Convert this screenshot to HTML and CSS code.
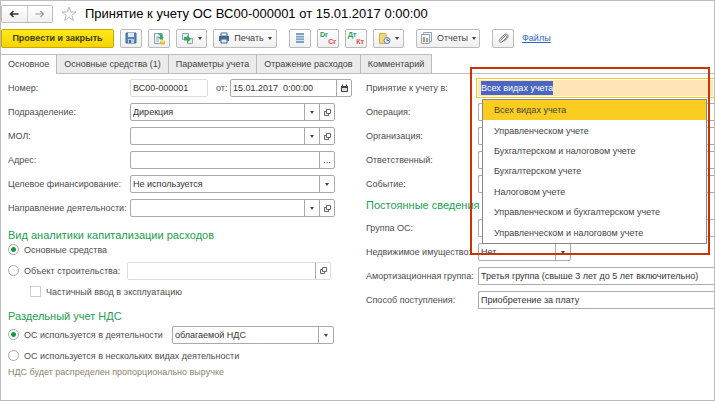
FILE: index.html
```html
<!DOCTYPE html>
<html lang="ru">
<head>
  <meta charset="UTF-8">
  <meta name="viewport" content="width=device-width, initial-scale=1.0">
  <title>Принятие к учету ОС</title>
  <link rel="stylesheet" href="styles.css">
</head>
<body>
  <svg class="sprite" aria-hidden="true">
    <symbol id="open" viewBox="0 0 9 9">
      <path d="M3.5 1.5h4v4h-4z M3.5 3.5h-2v4h4v-2" fill="none" stroke="#666"/>
    </symbol>
    <symbol id="calendar" viewBox="0 0 9 9">
      <path d="M1.5 2.5h6v5h-6z" fill="#ddd" stroke="#444"/>
      <path d="M1 2h7v2h-7z M2 0.500h1v2h-1z M6 0.500h1v2h-1z" fill="#444"/>
    </symbol>
  </svg>

  <div class="window">
    <header class="titlebar">
      <div class="nav">
        <button type="button" aria-label="Назад"><svg width="10" height="8" viewBox="0 0 10 8"><path d="M9.500 4H2M4.500 1L1.500 4l3 3" fill="none" stroke="#333" stroke-width="1.600"/></svg></button>
        <button type="button" aria-label="Вперед"><svg width="10" height="8" viewBox="0 0 10 8"><path d="M0.500 4H8M5.500 1l3 3-3 3" fill="none" stroke="#999" stroke-width="1.200"/></svg></button>
      </div>
      <svg class="star" width="16" height="16" viewBox="0 0 16 16"><path d="M8 1l1.800 5H15l-4.200 3.300 1.600 5.200L8 11.400l-4.400 3.100 1.600-5.200L1 6h5.200z" fill="#fff" stroke="#b5b9be"/></svg>
      <h1>Принятие к учету ОС ВС00-000001 от 15.01.2017 0:00:00</h1>
    </header>

    <div class="toolbar">
      <button type="button" class="btn primary">Провести и закрыть</button>
      <button type="button" class="btn icon" aria-label="Записать"><svg width="12" height="12" viewBox="0 0 12 12"><path d="M1 1h10v10H1z" fill="#5b86b5" stroke="#416b9b"/><path d="M3 1h6v4H3z" fill="#dfeaf5"/><path d="M3 7h6v4H3z" fill="#b9cde2"/><path d="M4 8h2v3H4z" fill="#416b9b"/></svg></button>
      <button type="button" class="btn icon" aria-label="Провести"><svg width="13" height="13" viewBox="0 0 13 13"><path d="M1.500 1.500h8v10h-8z" fill="#f4f7fa" stroke="#8fa3b8"/><path d="M3 5h3M3 7h3M3 9h3" stroke="#8fa3b8"/><path d="M5 2.500C6 1 8 1 9 2.500V5h2L8 8 5 5h2V3.500z" fill="#2fae57"/><path d="M7.500 9v3h4V9" fill="#ecc850" stroke="#dbb648"/><ellipse cx="9.500" cy="9" rx="2.500" ry="1" fill="#f6df8a"/></svg></button>
      <button type="button" class="btn menu" aria-label="Создать на основании"><svg width="13" height="13" viewBox="0 0 13 13"><path d="M1.500 1.500h6v6h-6z M6.500 6.500h5v5h-5z" fill="#e6edf3" stroke="#8fa3b8"/><path d="M3 5h3V3l4 4-4 4V8.500H3z" fill="#2fae57"/></svg><i class="caret"></i></button>
      <button type="button" class="btn menu wide"><svg width="12" height="12" viewBox="0 0 12 12"><path d="M3 1h6v3H3z" fill="#fff" stroke="#456d94"/><path d="M1 4h10v5H1z" fill="#456d94"/><path d="M3 7h6v4H3z" fill="#e3ecf5" stroke="#456d94"/></svg>Печать<i class="caret"></i></button>
      <button type="button" class="btn icon group" aria-label="Список"><svg width="10" height="12" viewBox="0 0 10 12"><path d="M1 1h8v10H1z" fill="#7fa1c3"/><path d="M1 3.500h8M1 6h8M1 8.500h8" stroke="#d6e3ef"/></svg></button>
      <button type="button" class="btn icon pair"><span>Dr</span><span>Cr</span></button>
      <button type="button" class="btn icon pair"><span>Дт</span><span>Кт</span></button>
      <button type="button" class="btn menu" aria-label="Журнал"><svg width="13" height="13" viewBox="0 0 13 13"><path d="M1.500 1.500h6l1 2v8h-7z" fill="#f1d578" stroke="#d0ae4a"/><circle cx="9" cy="8.500" r="3" fill="#edf3fa" stroke="#6488ba"/><path d="M9 6.500v2h2" fill="none" stroke="#456d94"/></svg><i class="caret"></i></button>
      <button type="button" class="btn menu wide group"><svg width="13" height="12" viewBox="0 0 13 12"><path d="M3.500 0.500h8v9h-8z" fill="#eef2f5" stroke="#8fa3b8"/><path d="M1.500 2.500h8v9h-8z" fill="#fff" stroke="#8fa3b8"/><path d="M4 5v5" stroke="#d9534f" stroke-width="1.500"/><path d="M7 6v4" stroke="#2fae57" stroke-width="1.500"/></svg>Отчеты<i class="caret"></i></button>
      <button type="button" class="btn icon group" aria-label="Прикрепить"><svg width="11" height="11" viewBox="0 0 11 11"><path d="M2.500 7.500l4.500-4.500a1 1 0 0 1 1.500 1.500L4 9a1.800 1.800 0 0 1-2.500-2.500L6.500 1.500a2.300 2.300 0 0 1 3.200 3.200L6 8.500" fill="none" stroke="#777"/></svg></button>
      <a class="files" href="#">Файлы</a>
    </div>

    <nav class="tabs">
      <a class="active" href="#">Основное</a>
      <a href="#">Основные средства (1)</a>
      <a href="#">Параметры учета</a>
      <a href="#">Отражение расходов</a>
      <a href="#">Комментарий</a>
    </nav>

    <form class="form">
      <div class="col left">
        <div class="row">
          <label for="number">Номер:</label>
          <div class="field short pale"><input id="number" type="text" value="ВС00-000001"></div>
          <label class="from" for="date">от:</label>
          <div class="field date"><input id="date" type="text" value="15.01.2017  0:00:00"><button type="button" aria-label="Календарь"><svg width="9" height="9"><use href="#calendar"/></svg></button></div>
        </div>
        <div class="row">
          <label for="dept">Подразделение:</label>
          <div class="field"><input id="dept" type="text" value="Дирекция"><button type="button" aria-label="Выбрать"><i class="caret"></i></button><button type="button" aria-label="Открыть"><svg width="9" height="9"><use href="#open"/></svg></button></div>
        </div>
        <div class="row">
          <label for="mol">МОЛ:</label>
          <div class="field"><input id="mol" type="text"><button type="button" aria-label="Выбрать"><i class="caret"></i></button><button type="button" aria-label="Открыть"><svg width="9" height="9"><use href="#open"/></svg></button></div>
        </div>
        <div class="row">
          <label for="address">Адрес:</label>
          <div class="field"><input id="address" type="text"><button type="button">...</button></div>
        </div>
        <div class="row">
          <label for="funding">Целевое финансирование:</label>
          <div class="field select"><select id="funding"><option>Не используется</option></select><i class="caret"></i></div>
        </div>
        <div class="row">
          <label for="direction">Направление деятельности:</label>
          <div class="field"><input id="direction" type="text"><button type="button" aria-label="Выбрать"><i class="caret"></i></button><button type="button" aria-label="Открыть"><svg width="9" height="9"><use href="#open"/></svg></button></div>
        </div>

        <h2 class="tight">Вид аналитики капитализации расходов</h2>
        <div class="choice">
          <input id="assets" type="radio" name="kind" checked>
          <label for="assets">Основные средства</label>
        </div>
        <div class="choice">
          <input id="building" type="radio" name="kind">
          <label for="building">Объект строительства:</label>
          <div class="field pale object"><input type="text" aria-label="Объект строительства"><button type="button" aria-label="Открыть"><svg width="9" height="9"><use href="#open"/></svg></button></div>
        </div>
        <div class="choice nested">
          <input id="partial" type="checkbox">
          <label for="partial">Частичный ввод в эксплуатацию</label>
        </div>

        <h2>Раздельный учет НДС</h2>
        <div class="choice">
          <input id="single" type="radio" name="vat" checked>
          <label for="single">ОС используется в деятельности</label>
          <div class="field select vat"><select aria-label="Вид деятельности"><option>облагаемой НДС</option></select><i class="caret"></i></div>
        </div>
        <div class="choice">
          <input id="several" type="radio" name="vat">
          <label for="several">ОС используется в нескольких видах деятельности</label>
        </div>
        <p class="note">НДС будет распределен пропорционально выручке</p>
      </div>

      <div class="col right">
        <div class="row">
          <label for="accounting">Принятие к учету в:</label>
          <div class="combo">
            <div class="focused"><input id="accounting" type="text" value="Всех видах учета"></div>
            <ul class="dropdown">
              <li class="selected">Всех видах учета</li>
              <li>Управленческом учете</li>
              <li>Бухгалтерском и налоговом учете</li>
              <li>Бухгалтерском учете</li>
              <li>Налоговом учете</li>
              <li>Управленческом и бухгалтерском учете</li>
              <li>Управленческом и налоговом учете</li>
            </ul>
            <div class="callout"></div>
          </div>
        </div>
        <div class="row">
          <label for="operation">Операция:</label>
          <div class="field open"><input id="operation" type="text"></div>
        </div>
        <div class="row">
          <label for="company">Организация:</label>
          <div class="field open"><input id="company" type="text"></div>
        </div>
        <div class="row">
          <label for="person">Ответственный:</label>
          <div class="field open"><input id="person" type="text"></div>
        </div>
        <div class="row">
          <label for="event">Событие:</label>
          <div class="field open"><input id="event" type="text"></div>
        </div>
        <h2 class="tight">Постоянные сведения</h2>
        <div class="row">
          <label for="group">Группа ОС:</label>
          <div class="field open"><input id="group" type="text"></div>
        </div>
        <div class="row">
          <label for="estate">Недвижимое имущество:</label>
          <div class="field select estate"><select id="estate"><option>Нет</option></select><i class="caret"></i></div>
        </div>
        <div class="row">
          <label for="amort">Амортизационная группа:</label>
          <div class="field open"><input id="amort" type="text" value="Третья группа (свыше 3 лет до 5 лет включительно)"></div>
        </div>
        <div class="row">
          <label for="receipt">Способ поступления:</label>
          <div class="field open"><input id="receipt" type="text" value="Приобретение за плату"></div>
        </div>
      </div>
    </form>
  </div>

  <script>
    const accounting = document.getElementById("accounting");
    accounting.focus();
    accounting.select();
  </script>
</body>
</html>
```
FILE: styles.css
```css
* {
  box-sizing: border-box;
}

body {
  margin: 0;
  font-family: "Liberation Sans", Arial, sans-serif;
  font-size: 9px;
  line-height: 14px;
  color: #4d4d4d;
  background: #fff;
}

button,
input,
select {
  font: inherit;
  color: #333;
  margin: 0;
}

.sprite {
  position: absolute;
  width: 0;
  height: 0;
}

.window {
  min-height: 100vh;
  border: 1px solid #bcbcbc;
  overflow: hidden;
}

.titlebar {
  display: flex;
  align-items: center;
  height: 26px;
}

.nav {
  display: flex;
  width: 52px;
  height: 18px;
  border: 1px solid #bbb;
  border-radius: 2px;
}

.nav button {
  flex: 1;
  display: flex;
  align-items: center;
  justify-content: center;
  padding: 0;
  border: 0;
  background: linear-gradient(#fff, #f0f0f0);
}

.nav button + button {
  border-left: 1px solid #ccc;
}

.star {
  margin: 0 8px;
}

h1 {
  margin: 0;
  font-size: 13px;
  line-height: 18px;
  font-weight: normal;
  color: #000;
  white-space: nowrap;
}

.toolbar {
  display: flex;
  align-items: center;
  gap: 6px;
  height: 22px;
}

.btn {
  display: flex;
  align-items: center;
  justify-content: center;
  flex: none;
  gap: 4px;
  height: 19px;
  padding: 0 4px;
  border: 1px solid #bbb;
  border-radius: 2px;
  background: linear-gradient(#fff, #efefef);
  color: #444;
}

.btn svg {
  flex: none;
}

.btn.primary {
  width: 113px;
  padding: 0;
  border-color: #c9a800;
  background: linear-gradient(#ffe81a, #f5d400);
  font-weight: bold;
  color: #443c00;
}

.btn.icon {
  width: 22px;
  padding: 0;
}

.btn.wide {
  width: 64px;
  padding: 0;
}

.btn.group {
  margin-left: 6px;
}

.btn.pair {
  flex-direction: column;
  gap: 0;
  padding: 0 2px;
  font-size: 7px;
  line-height: 7px;
  font-weight: bold;
}

.pair span {
  align-self: flex-start;
  color: #1f9e55;
}

.pair span + span {
  align-self: flex-end;
  color: #e04b4b;
}

.caret {
  border: 2px solid transparent;
  border-top: 3px solid #444;
  border-bottom: 0;
}

.files {
  margin-left: 2px;
  color: #2f62c0;
}

.tabs {
  display: flex;
  height: 20px;
  margin-top: 5px;
  border-bottom: 1px solid #bcbcbc;
}

.tabs a {
  height: 19px;
  padding: 0 7px;
  border: 1px solid #bcbcbc;
  border-width: 1px 0 0 1px;
  background: #ebebeb;
  line-height: 18px;
  color: #444;
  text-decoration: none;
}

.tabs a:last-child {
  border-right-width: 1px;
}

.tabs .active {
  height: 20px;
  border-left: 0;
  background: #fff;
}

.form {
  display: flex;
  gap: 13px;
  padding: 5px 0 0 7px;
}

.col {
  display: flex;
  flex-direction: column;
}

.left {
  width: 345px;
  flex: none;
}

.right {
  flex: 1;
  min-width: 0;
}

.row {
  display: flex;
  align-items: center;
  height: 18px;
  margin-bottom: 6px;
}

.row > label {
  flex: none;
  width: 122px;
  white-space: nowrap;
}

.right .row > label {
  width: 112px;
}

.row > .from {
  width: 14px;
  margin-left: 8px;
}

.field {
  display: flex;
  flex: none;
  width: 205px;
  height: 18px;
  border: 1px solid #aaa;
  border-radius: 2px;
  background: #fff;
}

.field input,
.field select {
  flex: 1;
  min-width: 0;
  padding: 0 2px;
  border: 0;
  outline: 0;
  background: none;
  appearance: none;
}

.field input {
  white-space: pre;
}

.field button {
  display: flex;
  align-items: center;
  justify-content: center;
  width: 15px;
  padding: 0;
  border: 0;
  border-left: 1px solid #aaa;
  background: none;
}

.select {
  position: relative;
}

.select select {
  padding-right: 15px;
  background: linear-gradient(#aaa, #aaa) right 14px top / 1px 100% no-repeat;
}

.select .caret {
  position: absolute;
  right: 5px;
  top: 7px;
}

.field.short {
  width: 78px;
}

.field.date {
  width: 122px;
}

.field.pale {
  border-color: #ddd;
}

.field.open {
  flex: 1;
  border-right: 0;
  border-radius: 2px 0 0 2px;
}

.field.estate {
  width: 93px;
}

.field.object {
  width: 204px;
  margin: 0 3px 0 auto;
}

.field.vat {
  width: 162px;
  margin-left: auto;
}

h2 {
  margin: 4px 0 -2px;
  font-size: 11px;
  line-height: 20px;
  font-weight: normal;
  color: #21a04f;
}

.left .tight {
  margin: 2px 0 -6px;
}

.right .tight {
  margin: -4px 0 4px;
}

.choice {
  display: flex;
  align-items: center;
  gap: 5px;
  width: 326px;
  height: 21px;
  white-space: nowrap;
}

.choice.nested {
  padding-left: 22px;
}

.choice > input {
  flex: none;
  width: 11px;
  height: 11px;
  border: 1px solid #aaa;
  background: #fff;
  appearance: none;
}

.choice > input[type="checkbox"] {
  border-color: #ccc;
}

.choice > input[type="radio"] {
  border-radius: 50%;
}

.choice > input[type="radio"]:checked {
  background: radial-gradient(circle, #159a45 0 2px, #fff 3px);
}

.note {
  margin: -1px 0 0;
  color: #8a8468;
}

.combo {
  position: relative;
  flex: 1;
}

.focused {
  display: flex;
  height: 20px;
  margin-left: -2px;
  padding: 1px;
  border: 1px solid #f7c51e;
  border-right: 0;
}

.focused input {
  flex: 1;
  min-width: 0;
  padding: 0 3px;
  border: 0;
  outline: 0;
  background: #ffe5b5;
}

.focused input::selection {
  background: #4a66c0;
  color: #fff;
}

.dropdown {
  position: absolute;
  z-index: 1;
  top: 21px;
  left: 4px;
  display: grid;
  width: 225px;
  height: 145px;
  margin: 0;
  padding: 0;
  border: 1px solid #888;
  background: #fff;
  list-style: none;
}

.dropdown li {
  display: flex;
  align-items: center;
  padding-left: 11px;
  color: #444;
}

.dropdown .selected {
  background: #facd20;
}

.callout {
  position: absolute;
  z-index: 2;
  top: -11px;
  left: -8px;
  width: 240px;
  height: 188px;
  border: 2px solid #cc3300;
  pointer-events: none;
}
```
